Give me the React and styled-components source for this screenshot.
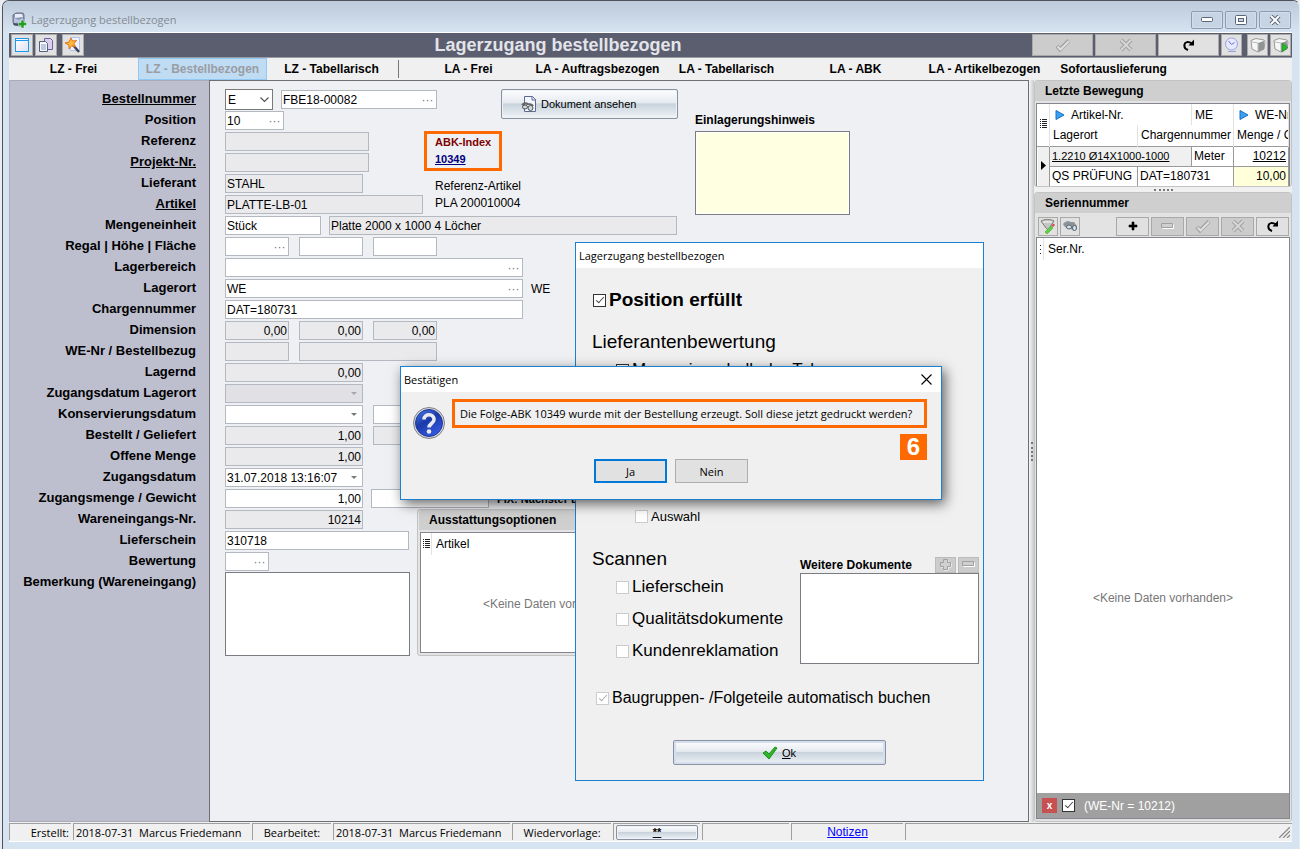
import React from "react";
import styled, { createGlobalStyle } from "styled-components";

const labels = [
  { id: "bestellnummer", text: "Bestellnummer", link: true },
  { id: "position", text: "Position" },
  { id: "referenz", text: "Referenz" },
  { id: "projekt", text: "Projekt-Nr.", link: true },
  { id: "lieferant", text: "Lieferant" },
  { id: "artikel", text: "Artikel", link: true },
  { id: "mengeneinheit", text: "Mengeneinheit" },
  { id: "regal", text: "Regal | Höhe | Fläche" },
  { id: "lagerbereich", text: "Lagerbereich" },
  { id: "lagerort", text: "Lagerort" },
  { id: "charge", text: "Chargennummer" },
  { id: "dimension", text: "Dimension" },
  { id: "wenr", text: "WE-Nr / Bestellbezug" },
  { id: "lagernd", text: "Lagernd" },
  { id: "zugangLagerort", text: "Zugangsdatum Lagerort" },
  { id: "konservierung", text: "Konservierungsdatum" },
  { id: "bestellt", text: "Bestellt / Geliefert" },
  { id: "offen", text: "Offene Menge" },
  { id: "zugangsdatum", text: "Zugangsdatum" },
  { id: "zugangsmenge", text: "Zugangsmenge / Gewicht" },
  { id: "wareneingang", text: "Wareneingangs-Nr." },
  { id: "lieferschein", text: "Lieferschein" },
  { id: "bewertung", text: "Bewertung" },
  { id: "bemerkung", text: "Bemerkung (Wareneingang)" },
];

const CheckIcon = () => (
  <svg width="16" height="14" viewBox="0 0 16 14" fill="none">
    <path d="M2 8l3 3.5L14 2.5" stroke="#a2a2a2" strokeWidth="4" />
    <path d="M2.5 8.5l3 3L14 3" stroke="#dedede" strokeWidth="2" />
  </svg>
);

const CrossIcon = () => (
  <svg width="14" height="14" viewBox="0 0 14 14" fill="none">
    <path d="M2 2l10 10M12 2L2 12" stroke="#a2a2a2" strokeWidth="4" />
    <path d="M2 2l10 10M12 2L2 12" stroke="#d6d6d6" strokeWidth="2" />
  </svg>
);

const RefreshIcon = () => (
  <svg width="12" height="12" viewBox="0 0 12 12" fill="none">
    <path d="M5 11C2 10 1 8 1.5 5.500C2 3 5 2 9 4.500" stroke="#000" strokeWidth="2" />
    <path d="M11 0.500V6.500H5.500z" fill="#000" />
  </svg>
);

const PlusIcon = () => (
  <svg width="10" height="10" viewBox="0 0 10 10">
    <path d="M4 1h2v3h3v2H6v3H4V6H1V4h3z" fill="#000" stroke="#000" strokeWidth="0.600" />
  </svg>
);

const PlusOutlineIcon = () => (
  <svg width="13" height="13" viewBox="0 0 13 13">
    <path d="M5 2h4v3h3v4H9v3H5V9H2V5h3z" fill="none" stroke="#fff" />
    <path d="M4.500 1.500h4v3h3v4h-3v3h-4v-3h-3v-4h3z" fill="#d0d0d0" stroke="#a0a0a0" />
  </svg>
);

const MinusIcon = () => (
  <svg width="13" height="7" viewBox="0 0 13 7">
    <path d="M1.500 5.500h11v-4" fill="none" stroke="#fff" />
    <path d="M0.500 0.500h11v4h-11z" fill="#d0d0d0" stroke="#a0a0a0" />
  </svg>
);

const AppIcon = () => (
  <svg width="16" height="16" viewBox="0 0 16 16">
    <path d="M2 3l3-2 7 0 1 2v8l-3 3-7-1-1-3z" fill="#8d97b4" stroke="#6a7086" />
    <path d="M4 2l7 0 1 3-8 1z" fill="#e6ecf8" />
    <path d="M2 11l8 1v2l-7-1z" fill="#4a4f60" />
    <path d="M3 6l5 2 4-2v4l-9 1z" fill="#b9c4e4" />
    <path d="M10 8h3v2.500h2.500v3H13V16h-3v-2.500H7.500v-3H10z" fill="#1fa01f" stroke="#eef" strokeWidth="0.500" />
  </svg>
);

const WindowIcon = () => (
  <svg width="16" height="16" viewBox="0 0 16 16">
    <defs>
      <linearGradient id="win" x1="0" y1="0" x2="1" y2="1">
        <stop offset="0" stopColor="#fff" />
        <stop offset="1" stopColor="#dfe0f6" />
      </linearGradient>
    </defs>
    <rect x="1.500" y="1.500" width="13" height="13" fill="url(#win)" stroke="#1b9bf0" />
    <path d="M1 3.500h14" stroke="#1b9bf0" />
  </svg>
);

const CopyIcon = () => (
  <svg width="16" height="16" viewBox="0 0 16 16">
    <path d="M6.500 1.500h6l2 2v9h-8z" fill="#d9d0ee" stroke="#6f5fa0" />
    <path d="M1.500 4.500h6l2 2v8h-8z" fill="#f4f6fc" stroke="#53617f" />
    <path d="M3 8h5M3 10h5M3 12h5" stroke="#8ba0c8" />
  </svg>
);

const WandIcon = () => (
  <svg width="18" height="18" viewBox="0 0 18 18">
    <path d="M6.500 1.500h9v13h-9z" fill="#eef2ff" stroke="#b4c2ea" />
    <path d="M9 9l6 7" stroke="#3d4352" strokeWidth="2.500" />
    <path d="M7 2l1.500 3 4-.5-2.500 3 1.500 3.500-3.500-1.500L5 13l0-4-4-2 4-1z" fill="#ffb63a" stroke="#e2761a" />
  </svg>
);

const ClockIcon = () => (
  <svg width="15" height="16" viewBox="0 0 15 16">
    <circle cx="7.500" cy="7" r="6" fill="#e6e9ff" stroke="#9ba1e0" />
    <path d="M4.500 4l3 3.500 3-2" fill="none" stroke="#6a70c4" />
    <path d="M4 14.500h8" stroke="#9ba1e0" />
  </svg>
);

const BoxIcon = ({ go }) => (
  <svg width="16" height="16" viewBox="0 0 16 16">
    <path d="M1 3.500l5-2 8 1.500 1 2-1 7-6 3-6-3z" fill="#f6f6f6" stroke="#9a9a9a" />
    <path d="M8 6l6-2v8l-6 3z" fill="#8f9494" />
    <path d="M2 5l6 1v8" fill="none" stroke="#bbb" />
    {go && <path d="M9 6l6 4.500L9 15z" fill="#27b52a" stroke="#11801a" strokeWidth="0.500" />}
  </svg>
);

const DocSearchIcon = () => (
  <svg width="16" height="17" viewBox="0 0 16 17">
    <path d="M3.500 0.500h8l3 3v12h-11z" fill="#f2f6ff" stroke="#5c6a8e" />
    <path d="M11 1v3h4" fill="none" stroke="#5c6a8e" />
    <path d="M1 9c2-2 4-2 6-1 2 0 4 0 5 2" fill="none" stroke="#666" strokeWidth="2" />
    <ellipse cx="4" cy="11" rx="2.500" ry="2" fill="#cfdbe0" stroke="#555" />
    <ellipse cx="9.500" cy="12" rx="2.500" ry="2.500" fill="#cfdbe0" stroke="#555" />
  </svg>
);

const FilterIcon = () => (
  <svg width="16" height="16" viewBox="0 0 16 16">
    <path d="M1 3c3-2 10-2 13 0l-4 6v4l-4-3z" fill="#c3c6c3" stroke="#7a7d7a" />
    <path d="M3 4h9" stroke="#fff" />
    <path d="M5 14l6-6 2 2-6 6z" fill="#5fd23c" stroke="#2e9a20" strokeWidth="0.500" />
    <path d="M11.500 7.500l2-2 1.500 1.500-2 2z" fill="#d94545" />
  </svg>
);

const BinocularsIcon = () => (
  <svg width="16" height="12" viewBox="0 0 16 12">
    <path d="M1 4l2-2 3-1 3 1 3 0 3 4 0 3-3 2-3-2-3 0-4-3z" fill="#8b9398" />
    <ellipse cx="7" cy="7" rx="2.500" ry="2" fill="#cfe3f0" stroke="#62696e" />
    <ellipse cx="12.500" cy="8" rx="2" ry="2.500" fill="#cfe3f0" stroke="#62696e" />
  </svg>
);

const QuestionIcon = () => (
  <svg width="34" height="34" viewBox="0 0 34 34">
    <defs>
      <linearGradient id="ask" x1="0" y1="0" x2="0.600" y2="1">
        <stop offset="0" stopColor="#4d80ea" />
        <stop offset="0.500" stopColor="#1a3aa8" />
        <stop offset="1" stopColor="#3458e0" />
      </linearGradient>
    </defs>
    <circle cx="17" cy="17" r="15.500" fill="#d8dade" stroke="#808288" />
    <circle cx="17" cy="17" r="13.500" fill="url(#ask)" stroke="#20369a" />
    <path
      d="M12 13.500c0-6.500 10.500-6 10 0 0 4-5 4-5 8"
      fill="none"
      stroke="#e8eaf0"
      strokeWidth="3.600"
    />
    <circle cx="17" cy="25.500" r="2.300" fill="#e8eaf0" />
  </svg>
);

const GreenCheck = () => (
  <svg width="16" height="14" viewBox="0 0 16 14">
    <path d="M1 7l3-2 3 3 6-7 2 1-8 11z" fill="#2fb52a" stroke="#1f8f1d" />
  </svg>
);

const ListIcon = () => (
  <svg width="7" height="10" viewBox="0 0 7 10" shapeRendering="crispEdges">
    <path d="M0 0h1v1H0zM0 2h1v1H0zM0 4h1v1H0zM0 6h1v1H0zM0 8h1v1H0z" fill="#222" />
    <path d="M2 0h5v1H2zM2 2h5v1H2zM2 4h5v1H2zM2 6h5v1H2zM2 8h5v1H2z" fill="#222" />
  </svg>
);

const DotsIcon = () => (
  <svg width="1" height="9" viewBox="0 0 1 9" shapeRendering="crispEdges">
    <path d="M0 0h1v1H0zM0 4h1v1H0zM0 8h1v1H0z" fill="#222" />
  </svg>
);

const SortIcon = () => (
  <svg width="10" height="10" viewBox="0 0 10 10">
    <path d="M1 0.500L9 5 1 9.500z" fill="#3aa0f2" stroke="#1a6fc4" />
  </svg>
);

const Caret = ({ faded }) => (
  <svg width="6" height="3" viewBox="0 0 6 3">
    <path d="M0 0h6L3 3z" fill={faded ? "#a8a8ac" : "#77797d"} />
  </svg>
);

const GripIcon = () => (
  <svg width="11" height="11" viewBox="0 0 11 11">
    <path d="M0 11L11 0M4 11l7-7M8 11l3-3" stroke="#8d8d8d" strokeWidth="1.300" />
  </svg>
);

const Field = ({ id, label, value = "", w, readOnly, right, more, combo, faded }) => (
  <FieldBox $w={w} $readOnly={readOnly} $faded={faded}>
    <FieldInput
      id={id}
      aria-label={label}
      defaultValue={value}
      readOnly={readOnly}
      $right={right}
    />
    {more && <FieldButton aria-label="Auswählen">···</FieldButton>}
    {combo && (
      <FieldButton aria-label="Kalender">
        <Caret faded={faded} />
      </FieldButton>
    )}
  </FieldBox>
);

const Check = ({ id, label, size, bold, indent, ...rest }) => (
  <CheckRow $indent={indent}>
    <CheckBox id={id} type="checkbox" {...rest} />
    <CheckLabel htmlFor={id} $size={size} $bold={bold}>
      {label}
    </CheckLabel>
  </CheckRow>
);

const TitleBar = () => (
  <TitleRow>
    <AppIcon />
    <WindowTitle>Lagerzugang bestellbezogen</WindowTitle>
    <WindowButtons>
      <WindowButton aria-label="Minimieren">
        <svg width="12" height="6" viewBox="0 0 12 6">
          <rect x="0.500" y="0.500" width="11" height="4" rx="1" fill="#fff" stroke="#5b6377" />
        </svg>
      </WindowButton>
      <WindowButton aria-label="Maximieren">
        <svg width="12" height="10" viewBox="0 0 12 10">
          <rect x="0.500" y="0.500" width="11" height="9" rx="1" fill="#fff" stroke="#5b6377" />
          <rect x="3.500" y="3.500" width="5" height="3" fill="#c5d2e4" stroke="#5b6377" />
        </svg>
      </WindowButton>
      <WindowButton aria-label="Schließen">
        <svg width="12" height="10" viewBox="0 0 12 10">
          <path d="M2 1l8 8M10 1L2 9" stroke="#5b6377" strokeWidth="4" />
          <path d="M2 1l8 8M10 1L2 9" stroke="#fff" strokeWidth="2" />
        </svg>
      </WindowButton>
    </WindowButtons>
  </TitleRow>
);

const Toolbar = () => (
  <ToolRow>
    <ToolGroup>
      <ToolButton aria-label="Fenster"><WindowIcon /></ToolButton>
      <ToolButton aria-label="Kopieren"><CopyIcon /></ToolButton>
    </ToolGroup>
    <ToolGroup>
      <ToolButton aria-label="Assistent"><WandIcon /></ToolButton>
    </ToolGroup>
    <PageTitle>Lagerzugang bestellbezogen</PageTitle>
    <ToolGroup>
      <ToolButton $w={61} disabled aria-label="Übernehmen"><CheckIcon /></ToolButton>
      <ToolButton $w={61} disabled aria-label="Verwerfen"><CrossIcon /></ToolButton>
      <ToolButton $w={61} aria-label="Aktualisieren"><RefreshIcon /></ToolButton>
      <ToolButton $w={21} aria-label="Verlauf"><ClockIcon /></ToolButton>
    </ToolGroup>
    <ToolGroup>
      <ToolButton $w={21} aria-label="Lager"><BoxIcon /></ToolButton>
      <ToolButton $w={21} aria-label="Buchen"><BoxIcon go /></ToolButton>
    </ToolGroup>
  </ToolRow>
);

const Tabs = () => (
  <TabRow>
    <Tab>LZ - Frei</Tab>
    <Tab $active>LZ - Bestellbezogen</Tab>
    <Tab>LZ - Tabellarisch</Tab>
    <TabDivider />
    <Tab>LA - Frei</Tab>
    <Tab>LA - Auftragsbezogen</Tab>
    <Tab>LA - Tabellarisch</Tab>
    <Tab>LA - ABK</Tab>
    <Tab>LA - Artikelbezogen</Tab>
    <Tab>Sofortauslieferung</Tab>
  </TabRow>
);

const HeadBlock = () => (
  <HeadGrid>
    <HeadRow $row={1}>
      <SelectBox>
        <Select aria-label="Bestellart" defaultValue="E">
          <option>E</option>
        </Select>
        <svg width="9" height="6" viewBox="0 0 9 6" fill="none">
          <path d="M0.500 0.500l4 4 4-4" stroke="#555" strokeWidth="1.200" />
        </svg>
      </SelectBox>
      <Field id="bestellnummer" value="FBE18-00082" w={156} more />
    </HeadRow>
    <HeadRow $row={2}>
      <Field id="position" value="10" w={59} more />
    </HeadRow>
    <HeadRow $row={3}>
      <Field id="referenz" w={144} readOnly />
    </HeadRow>
    <HeadRow $row={4}>
      <Field id="projekt" w={144} readOnly />
    </HeadRow>
    <HeadRow $row={5}>
      <Field id="lieferant" value="STAHL" w={138} readOnly />
    </HeadRow>
    <HeadRow $row={6}>
      <Field id="artikel" value="PLATTE-LB-01" w={198} readOnly />
    </HeadRow>
    <AbkBox>
      <AbkTitle>ABK-Index</AbkTitle>
      <AbkLink href="#abk">10349</AbkLink>
    </AbkBox>
    <ArticleRef>
      <div>Referenz-Artikel</div>
      <div>PLA 200010004</div>
    </ArticleRef>
    <DocButton>
      <DocSearchIcon />
      Dokument ansehen
    </DocButton>
    <HintLabel htmlFor="hinweis">Einlagerungshinweis</HintLabel>
    <HintArea id="hinweis" />
  </HeadGrid>
);

const EntryForm = () => (
  <FormPanel>
    <HeadBlock />
    <Row>
      <Field id="mengeneinheit" value="Stück" w={96} />
      <Field label="Bezeichnung" value="Platte 2000 x 1000 4 Löcher" w={348} readOnly />
    </Row>
    <Row $gap={10}>
      <Field id="regal" w={64} more />
      <Field label="Höhe" w={64} />
      <Field label="Fläche" w={64} />
    </Row>
    <Row>
      <Field id="lagerbereich" w={298} more />
    </Row>
    <Row>
      <Field id="lagerort" value="WE" w={298} more />
      <span>WE</span>
    </Row>
    <Row>
      <Field id="charge" value="DAT=180731" w={298} />
    </Row>
    <Row $gap={10}>
      <Field id="dimension" value="0,00" w={64} readOnly right />
      <Field label="Dimension 2" value="0,00" w={64} readOnly right />
      <Field label="Dimension 3" value="0,00" w={64} readOnly right />
    </Row>
    <Row $gap={10}>
      <Field id="wenr" w={64} readOnly />
      <Field label="Bestellbezug" w={138} readOnly />
    </Row>
    <Row>
      <Field id="lagernd" value="0,00" w={138} readOnly right />
    </Row>
    <Row>
      <Field id="zugangLagerort" w={138} readOnly combo faded />
    </Row>
    <Row $gap={10}>
      <Field id="konservierung" w={138} combo />
      <Field label="Konservierung bis" w={118} />
    </Row>
    <Row $gap={10}>
      <Field id="bestellt" value="1,00" w={138} readOnly right />
      <Field label="Geliefert" w={118} readOnly />
    </Row>
    <Row>
      <Field id="offen" value="1,00" w={138} readOnly right />
    </Row>
    <Row>
      <Field id="zugangsdatum" value="31.07.2018 13:16:07" w={138} combo />
    </Row>
    <Row>
      <Field id="zugangsmenge" value="1,00" w={138} right />
      <Field label="Gewicht" w={118} />
      <FixText>FIX: Nächster Beleg</FixText>
    </Row>
    <LowerBlock>
      <LowerLeft>
        <Row>
          <Field id="wareneingang" value="10214" w={138} readOnly right />
        </Row>
        <Row>
          <Field id="lieferschein" value="310718" w={184} />
        </Row>
        <Row>
          <Field id="bewertung" w={44} more />
        </Row>
        <NoteArea id="bemerkung" />
      </LowerLeft>
      <OptionsGroup>
        <GroupTitle>Ausstattungsoptionen</GroupTitle>
        <ListBox>
          <ListHead>
            <ListMark><ListIcon /></ListMark>
            Artikel
          </ListHead>
          <EmptyText>&lt;Keine Daten vorhanden&gt;</EmptyText>
        </ListBox>
      </OptionsGroup>
    </LowerBlock>
  </FormPanel>
);

const LastMovement = () => (
  <MovementGroup>
    <GroupTitle>Letzte Bewegung</GroupTitle>
    <TableBox>
      <MoveTable>
        <colgroup>
          <col width="12" />
          <col width="88" />
          <col width="54" />
          <col width="42" />
          <col />
        </colgroup>
        <thead>
          <tr>
            <Th rowSpan="2" $mark><ListIcon /></Th>
            <Th colSpan="2">
              <SortHead><SortIcon />Artikel-Nr.</SortHead>
            </Th>
            <Th>ME</Th>
            <Th>
              <SortHead><SortIcon />WE-Nr.</SortHead>
            </Th>
          </tr>
          <tr>
            <Th>Lagerort</Th>
            <Th colSpan="2">Chargennummer</Th>
            <Th>Menge / Gew.</Th>
          </tr>
        </thead>
        <tbody>
          <tr>
            <Td rowSpan="2" $mark>
              <svg width="5" height="9" viewBox="0 0 5 9">
                <path d="M0 0l5 4.500L0 9z" fill="#000" />
              </svg>
            </Td>
            <Td colSpan="2" $bg="#f0f0f0">
              <ItemLink href="#artikel" $small>1.2210 Ø14X1000-1000</ItemLink>
            </Td>
            <Td>Meter</Td>
            <Td $right>
              <ItemLink href="#we">10212</ItemLink>
            </Td>
          </tr>
          <tr>
            <Td>QS PRÜFUNG</Td>
            <Td colSpan="2">DAT=180731</Td>
            <Td $right $bg="#ffffd9">10,00</Td>
          </tr>
        </tbody>
      </MoveTable>
    </TableBox>
  </MovementGroup>
);

const SerialNumbers = () => (
  <SerialGroup>
    <GroupTitle>Seriennummer</GroupTitle>
    <SerialTools>
      <SmallButton $w={20} aria-label="Filter"><FilterIcon /></SmallButton>
      <SmallButton $w={20} aria-label="Suchen"><BinocularsIcon /></SmallButton>
      <Spacer />
      <SmallButton $w={33} aria-label="Hinzufügen"><PlusIcon /></SmallButton>
      <SmallButton $w={33} disabled aria-label="Entfernen"><MinusIcon /></SmallButton>
      <SmallButton $w={33} disabled aria-label="Speichern"><CheckIcon /></SmallButton>
      <SmallButton $w={33} disabled aria-label="Abbrechen"><CrossIcon /></SmallButton>
      <SmallButton $w={33} aria-label="Neu laden"><RefreshIcon /></SmallButton>
    </SerialTools>
    <ListBox>
      <ListHead>
        <ListMark $narrow><DotsIcon /></ListMark>
        Ser.Nr.
      </ListHead>
      <EmptyText $top={142}>&lt;Keine Daten vorhanden&gt;</EmptyText>
      <FilterBar>
        <FilterClose aria-label="Filter entfernen">x</FilterClose>
        <CheckBox id="filter" type="checkbox" defaultChecked />
        <FilterLabel htmlFor="filter">(WE-Nr = 10212)</FilterLabel>
      </FilterBar>
    </ListBox>
  </SerialGroup>
);

const StatusBar = () => (
  <StatusRow>
    <StatusCell $w={62} $align="flex-end">Erstellt:</StatusCell>
    <StatusCell $w={177}>2018-07-31&nbsp; Marcus Friedemann</StatusCell>
    <StatusCell $w={79} $align="center">Bearbeitet:</StatusCell>
    <StatusCell $w={177}>2018-07-31&nbsp; Marcus Friedemann</StatusCell>
    <StatusCell $w={99} $align="center">Wiedervorlage:</StatusCell>
    <StatusCell $w={87}>
      <StatusButton>**</StatusButton>
    </StatusCell>
    <StatusCell $w={87} />
    <StatusCell $w={112} $align="center">
      <NoteLink href="#notizen">Notizen</NoteLink>
    </StatusCell>
    <StatusCell $align="flex-end">
      <GripIcon />
    </StatusCell>
  </StatusRow>
);

const ReceiptDialog = () => (
  <ReceiptWindow role="dialog" aria-label="Lagerzugang bestellbezogen">
    <DialogTitle>Lagerzugang bestellbezogen</DialogTitle>
    <ReceiptBody>
      <Check id="erfuellt" label="Position erfüllt" size={19} bold indent={1} defaultChecked />
      <SectionTitle>Lieferantenbewertung</SectionTitle>
      <Check id="toleranz" label="Menge innerhalb der Toleranz" size={17} indent={24} />
      <SelectionRow>
        <Check id="auswahl" label="Auswahl" size={13} indent={43} disabled />
      </SelectionRow>
      <ScanBlock>
        <ScanList>
          <SectionTitle $flat>Scannen</SectionTitle>
          <Check id="scanLiefer" label="Lieferschein" size={17} indent={24} disabled />
          <Check id="scanQual" label="Qualitätsdokumente" size={17} indent={24} disabled />
          <Check id="scanKunde" label="Kundenreklamation" size={17} indent={24} disabled />
        </ScanList>
        <DocsColumn>
          <DocsHead>
            <DocsLabel htmlFor="dokumente">Weitere Dokumente</DocsLabel>
            <TinyButton disabled aria-label="Dokument hinzufügen"><PlusOutlineIcon /></TinyButton>
            <TinyButton disabled aria-label="Dokument entfernen"><MinusIcon /></TinyButton>
          </DocsHead>
          <DocsArea id="dokumente" />
        </DocsColumn>
      </ScanBlock>
      <Check
        id="baugruppen"
        label="Baugruppen- /Folgeteile automatisch buchen"
        size={16}
        indent={4}
        disabled
        defaultChecked
      />
      <OkButton>
        <GreenCheck />
        <span><u>O</u>k</span>
      </OkButton>
    </ReceiptBody>
  </ReceiptWindow>
);

const ConfirmDialog = () => (
  <ConfirmWindow role="dialog" aria-label="Bestätigen">
    <DialogTitle>
      Bestätigen
      <CloseButton aria-label="Schließen">
        <svg width="11" height="11" viewBox="0 0 11 11">
          <path d="M0.500 0.500l10 10M10.500 0.500l-10 10" stroke="#000" strokeWidth="1.100" />
        </svg>
      </CloseButton>
    </DialogTitle>
    <ConfirmBody>
      <QuestionIcon />
      <Message>
        Die Folge-ABK 10349 wurde mit der Bestellung erzeugt. Soll diese jetzt gedruckt werden?
      </Message>
    </ConfirmBody>
    <ConfirmButtons>
      <DialogButton $primary>Ja</DialogButton>
      <DialogButton>Nein</DialogButton>
    </ConfirmButtons>
    <StepBadge>6</StepBadge>
  </ConfirmWindow>
);

const App = () => (
  <Page>
    <GlobalStyle />
    <Window>
      <TitleBar />
      <Toolbar />
      <Tabs />
      <Body>
        <LabelPanel>
          {labels.map((l) => (
            <RowLabel key={l.id} htmlFor={l.id}>
              {l.link ? <a href={`#${l.id}`}>{l.text}</a> : l.text}
            </RowLabel>
          ))}
        </LabelPanel>
        <EntryForm />
        <Splitter><VerticalGrip /></Splitter>
        <SidePanel>
          <LastMovement />
          <SideSplitter><HorizontalGrip /></SideSplitter>
          <SerialNumbers />
        </SidePanel>
      </Body>
      <StatusBar />
      <ReceiptDialog />
      <ConfirmDialog />
    </Window>
  </Page>
);

export default App;

const ui = `"Liberation Sans", Arial, sans-serif`;
const segoe = `"Open Sans", "Noto Sans", sans-serif`;

const GlobalStyle = createGlobalStyle`
  *, *::before, *::after {
    box-sizing: border-box;
  }
  body {
    margin: 0;
    background: #e9ecf0;
    font-family: ${ui};
    font-size: 12px;
    color: #000;
  }
  button, input, select, textarea {
    font: inherit;
    color: inherit;
    margin: 0;
  }
  svg {
    flex: none;
  }
`;

const Page = styled.div`
  padding-left: 2px;
`;

const Window = styled.div`
  position: relative;
  display: flex;
  flex-direction: column;
  min-height: 100vh;
  padding: 0 7px 7px 6px;
  border: 1px solid #4d525b;
  border-right-color: #e4ebf3;
  border-bottom: none;
  border-radius: 7px 7px 0 0;
  background: #d6e3f1;
  overflow: hidden;
`;

const TitleRow = styled.header`
  display: flex;
  align-items: center;
  gap: 4px;
  height: 31px;
  margin: 0 -7px 0 -6px;
  padding: 6px 8px 0 8px;
  background: linear-gradient(#bccad9, #d6e3f1);
`;

const WindowTitle = styled.span`
  flex: 1;
  font-family: ${segoe};
  font-size: 11px;
  color: #858b93;
`;

const WindowButtons = styled.div`
  display: flex;
  gap: 2px;
`;

const WindowButton = styled.button`
  display: flex;
  align-items: center;
  justify-content: center;
  width: 32px;
  height: 18px;
  padding: 0;
  border: 1px solid #8c9bb4;
  border-radius: 2px;
  background: #c6d4e4;
  box-shadow: inset 0 0 0 1px #d3deeb;
`;

const ToolRow = styled.div`
  display: flex;
  align-items: center;
  gap: 5px;
  height: 25px;
  padding: 0 1px 0 2px;
  border-top: 1px solid #fff;
  background: #5b5e6f;
`;

const ToolGroup = styled.div`
  display: flex;
  gap: 2px;
`;

const ToolButton = styled.button`
  display: flex;
  align-items: center;
  justify-content: center;
  width: ${(props) => props.$w || 22}px;
  height: 22px;
  padding: 0;
  border: 1px solid #a9a9a9;
  background: ${(props) => (props.disabled ? "#cccccc" : "#e1e1e1")};
`;

const PageTitle = styled.h1`
  flex: 1;
  margin: 0;
  text-align: center;
  font-size: 18px;
  line-height: 20px;
  color: #e3e4ea;
`;

const TabRow = styled.nav`
  display: flex;
  align-items: center;
  height: 23px;
  border-top: 1px solid #9a9ba3;
  background: #f0f0f0;
`;

const Tab = styled.button`
  width: 129px;
  height: 22px;
  padding: 0;
  border: 1px solid ${(props) => (props.$active ? "#90c8f6" : "transparent")};
  background: ${(props) => (props.$active ? "#c0dcf3" : "transparent")};
  color: ${(props) => (props.$active ? "#9a9da3" : "#000")};
  font-size: 12px;
  font-weight: bold;
  white-space: nowrap;
`;

const TabDivider = styled.span`
  width: 1px;
  height: 18px;
  margin: 0 5px 0 2px;
  background: #777;
`;

const Body = styled.main`
  display: flex;
  flex: 1;
  background: #f0f0f0;
`;

const LabelPanel = styled.div`
  display: flex;
  flex-direction: column;
  width: 200px;
  padding: 8px 13px 0 0;
  border: 1px solid #a9abbb;
  border-right: none;
  background: #bdbfcf;
`;

const RowLabel = styled.label`
  height: 21px;
  line-height: 20px;
  text-align: right;
  font-size: 13px;
  font-weight: bold;
  white-space: nowrap;

  a {
    color: inherit;
  }
`;

const FormPanel = styled.form`
  flex: 1;
  min-width: 0;
  padding: 8px 0 8px 15px;
  border: 1px solid #6d6f75;
  background: #eff0f3;
`;

const Row = styled.div`
  display: flex;
  align-items: center;
  gap: ${(props) => props.$gap || 8}px;
  height: 21px;
  white-space: nowrap;
`;

const HeadGrid = styled.div`
  display: grid;
  grid-template-columns: 199px 77px 177px 172px;
  grid-template-rows: repeat(6, 21px);
`;

const HeadRow = styled(Row)`
  grid-column: 1;
  grid-row: ${(props) => props.$row};
`;

const FieldBox = styled.div`
  display: flex;
  align-items: center;
  flex: none;
  width: ${(props) => props.$w}px;
  height: 19px;
  border: 1px solid #b4b8c0;
  background: ${(props) =>
    props.$faded ? "#e1e1e5" : props.$readOnly ? "#eaeaec" : "#fff"};
`;

const FieldInput = styled.input`
  flex: 1;
  min-width: 0;
  height: 17px;
  padding: 0 1px;
  border: none;
  outline: none;
  background: transparent;
  text-align: ${(props) => (props.$right ? "right" : "left")};
`;

const FieldButton = styled.button.attrs({ type: "button" })`
  display: flex;
  align-items: center;
  justify-content: center;
  width: 17px;
  height: 17px;
  padding: 0;
  border: none;
  background: transparent;
  color: #777;
`;

const SelectBox = styled.div`
  position: relative;
  flex: none;
  width: 48px;
  height: 21px;

  svg {
    position: absolute;
    right: 4px;
    top: 8px;
    pointer-events: none;
  }
`;

const Select = styled.select`
  appearance: none;
  width: 100%;
  height: 21px;
  padding: 0 2px;
  border: 1px solid #7a7a7a;
  border-radius: 0;
  background: #fff;
`;

const AbkBox = styled.div`
  grid-area: 3 / 2 / 5 / 3;
  height: 40px;
  width: 78px;
  padding: 0 8px;
  border: 3px solid #ff6a00;
  font-size: 11px;
  font-weight: bold;
  line-height: 17px;
  white-space: nowrap;
`;

const AbkTitle = styled.div`
  color: #800000;
`;

const AbkLink = styled.a`
  color: #000080;
`;

const ArticleRef = styled.div`
  grid-area: 5 / 2 / 7 / 4;
  padding: 5px 11px 0;
  line-height: 17px;
`;

const GlassButton = styled.button.attrs({ type: "button" })`
  display: flex;
  align-items: center;
  justify-content: center;
  gap: 4px;
  padding: 0;
  border: 1px solid #8a92a2;
  border-radius: 2px;
  background: linear-gradient(#fdfdfe, #e6ebf0 45%, #c9d3dd 50%, #e3e9ee 85%, #f4f6f8);
  box-shadow: inset 0 0 0 1px #eef1f5;
  font-size: 11px;
`;

const DocButton = styled(GlassButton)`
  grid-area: 1 / 3 / 3 / 4;
  justify-content: flex-start;
  height: 30px;
  padding-left: 19px;
`;

const HintLabel = styled.label`
  grid-area: 2 / 4;
  margin-left: 17px;
  line-height: 21px;
  font-size: 12px;
  font-weight: bold;
`;

const TextArea = styled.textarea`
  display: block;
  padding: 2px;
  border: 1px solid #7a7c82;
  border-radius: 0;
  background: #fff;
  resize: none;
`;

const HintArea = styled(TextArea)`
  grid-area: 3 / 4 / 7 / 5;
  width: 155px;
  margin-left: 17px;
  background: #ffffe1;
  box-shadow: inset 0 0 0 1px #fff;
`;

const FixText = styled.span`
  font-size: 11px;
  font-weight: bold;
`;

const LowerBlock = styled.div`
  display: flex;
  gap: 7px;
`;

const LowerLeft = styled.div`
  width: 185px;
`;

const NoteArea = styled(TextArea)`
  width: 100%;
  height: 84px;
`;

const Group = styled.section`
  display: flex;
  flex-direction: column;
  padding: 0 2px 2px;
  border: 1px solid #c3c3c3;
  border-radius: 3px;
  background: #e3e3e3;
`;

const OptionsGroup = styled(Group)`
  width: 272px;
`;

const GroupTitle = styled.h2`
  margin: 0 -1px 2px;
  padding: 0 10px;
  border-radius: 3px 3px 0 0;
  background: #cfcfcf;
  font-size: 12px;
  line-height: 20px;
`;

const ListBox = styled.div`
  display: flex;
  flex-direction: column;
  flex: 1;
  border: 1px solid #83868f;
  background: #fff;
`;

const ListHead = styled.div`
  display: flex;
  align-items: center;
  gap: 4px;
  height: 22px;
`;

const ListMark = styled.span`
  display: flex;
  align-items: center;
  justify-content: center;
  width: ${(props) => (props.$narrow ? 7 : 11)}px;
  height: 22px;
  border-right: 1px solid #e2e2e2;
`;

const EmptyText = styled.div`
  display: flex;
  flex: 1;
  align-items: center;
  justify-content: center;
  padding-top: ${(props) => props.$top || 0}px;
  color: #777;
`;

const Splitter = styled.div`
  display: flex;
  align-items: center;
  justify-content: center;
  width: 5px;
  background: linear-gradient(to right, #f6f6f6, #c9cacd);
`;

const VerticalGrip = styled.span`
  height: 19px;
  border-left: 2px dotted #77797f;
`;

const SideSplitter = styled.div`
  display: flex;
  align-items: center;
  justify-content: center;
  height: 5px;
`;

const HorizontalGrip = styled.span`
  width: 19px;
  border-top: 2px dotted #77797f;
`;

const SidePanel = styled.aside`
  display: flex;
  flex-direction: column;
  width: 258px;
`;

const MovementGroup = styled(Group)`
  padding: 0 1px;
`;

const SerialGroup = styled(Group)`
  flex: 1;
  padding: 0 1px 2px;
`;

const TableBox = styled.div`
  height: 83px;
  border: 1px solid #83868f;
  border-bottom: none;
  background: #fff;
  overflow: hidden;
`;

const MoveTable = styled.table`
  width: 100%;
  table-layout: fixed;
  border-collapse: collapse;
`;

const Th = styled.th`
  height: 21px;
  padding: ${(props) => (props.$mark ? "0" : "0 3px")};
  border-right: 1px solid #e2e2e2;
  font-weight: normal;
  text-align: ${(props) => (props.$mark ? "center" : "left")};
  white-space: nowrap;
  overflow: hidden;
`;

const SortHead = styled.span`
  display: flex;
  align-items: center;
  gap: 6px;
  padding-left: 2px;
`;

const Td = styled.td`
  height: 20px;
  padding: ${(props) => (props.$mark ? "0" : "0 2px")};
  border: 1px solid #9a9a9a;
  border-left-color: ${(props) => (props.$mark ? "transparent" : "#9a9a9a")};
  background: ${(props) => props.$bg || (props.$mark ? "#f0f0f0" : "#fff")};
  text-align: ${(props) => (props.$right ? "right" : props.$mark ? "center" : "left")};
  white-space: nowrap;
`;

const ItemLink = styled.a`
  color: inherit;
  font-size: ${(props) => (props.$small ? 11 : 12)}px;
`;

const SerialTools = styled.div`
  display: flex;
  align-items: center;
  gap: 2px;
  height: 22px;
  padding: 0 1px 0 2px;
`;

const Spacer = styled.span`
  flex: 1;
`;

const SmallButton = styled(ToolButton)`
  height: 19px;
`;

const FilterBar = styled.div`
  display: flex;
  align-items: center;
  gap: 5px;
  height: 25px;
  padding: 0 5px;
  background: #a0a0a0;
`;

const FilterClose = styled.button`
  width: 15px;
  height: 15px;
  padding: 0;
  border: none;
  background: #c75050;
  color: #fff;
  font-size: 10px;
  font-weight: bold;
  line-height: 14px;
`;

const FilterLabel = styled.label`
  margin-left: 4px;
  color: #fff;
`;

const CheckBox = styled.input`
  appearance: none;
  flex: none;
  position: relative;
  width: 13px;
  height: 13px;
  border: 1px solid #333;
  background: #fff;

  &:disabled {
    border-color: #ccc;
  }

  &:checked::after {
    content: "";
    position: absolute;
    left: 4px;
    top: 0;
    width: 4px;
    height: 8px;
    border: solid #444;
    border-width: 0 1px 1px 0;
    transform: rotate(42deg);
  }

  &:disabled:checked::after {
    border-color: #aaa;
  }
`;

const StatusRow = styled.footer`
  display: flex;
  align-items: center;
  gap: 2px;
  height: 20px;
  border-bottom: 1px solid #fff;
  background: #f0f0f0;
`;

const StatusCell = styled.div`
  display: flex;
  align-items: center;
  justify-content: ${(props) => props.$align || "flex-start"};
  flex: ${(props) => (props.$w ? "none" : "1")};
  width: ${(props) => (props.$w ? `${props.$w}px` : "auto")};
  height: 17px;
  padding: 0 2px;
  border-top: 1px solid #a0a0a0;
  border-left: 1px solid #a0a0a0;
  font-family: ${segoe};
  font-size: 11px;
  white-space: nowrap;
`;

const StatusButton = styled(GlassButton)`
  flex: 1;
  height: 15px;
  font-family: ${ui};
  font-weight: bold;
  text-decoration: underline;
`;

const NoteLink = styled.a`
  font-family: ${ui};
  font-size: 12px;
  color: #0000ff;
`;

const DialogWindow = styled.div`
  position: absolute;
  border: 1px solid #1b80cf;
  background: #f0f0f0;
`;

const ReceiptWindow = styled(DialogWindow)`
  left: 572px;
  top: 241px;
  width: 409px;
`;

const ConfirmWindow = styled(DialogWindow)`
  left: 397px;
  top: 365px;
  width: 542px;
  box-shadow: 3px 4px 12px rgba(0, 0, 0, 0.6);
`;

const DialogTitle = styled.div`
  display: flex;
  align-items: center;
  justify-content: space-between;
  height: 25px;
  padding: 0 3px;
  background: #fff;
  font-family: ${segoe};
  font-size: 11px;
`;

const ReceiptBody = styled.div`
  display: flex;
  flex-direction: column;
  padding: 16px 4px 15px 16px;
`;

const CheckRow = styled.div`
  display: flex;
  align-items: center;
  gap: 3px;
  height: 32px;
  padding-left: ${(props) => props.$indent}px;
`;

const CheckLabel = styled.label`
  font-size: ${(props) => props.$size}px;
  font-weight: ${(props) => (props.$bold ? "bold" : "normal")};
  white-space: nowrap;
`;

const SectionTitle = styled.h3`
  margin: ${(props) => (props.$flat ? "0" : "14px 0 0")};
  font-size: 19px;
  font-weight: normal;
  line-height: 24px;
`;

const SelectionRow = styled.div`
  margin-top: 114px;
`;

const ScanBlock = styled.div`
  display: flex;
  margin: 15px 0;
`;

const ScanList = styled.div`
  width: 208px;
`;

const DocsColumn = styled.div`
  flex: 1;
  padding-top: 9px;
`;

const DocsHead = styled.div`
  display: flex;
  align-items: center;
  gap: 2px;
  height: 17px;
`;

const DocsLabel = styled.label`
  flex: 1;
  font-weight: bold;
`;

const TinyButton = styled(ToolButton)`
  width: 21px;
  height: 16px;
  border-color: #bcbcbc;
`;

const DocsArea = styled(TextArea)`
  width: 100%;
  height: 91px;
`;

const OkButton = styled(GlassButton)`
  align-self: center;
  width: 213px;
  height: 25px;
  margin: 26px 13px 0 0;
  box-shadow: inset 0 0 0 2px #d5deef;
`;

const CloseButton = styled.button`
  display: flex;
  align-items: center;
  justify-content: center;
  width: 24px;
  height: 24px;
  padding: 0;
  border: none;
  background: transparent;
`;

const ConfirmBody = styled.div`
  display: flex;
  align-items: flex-end;
  gap: 6px;
  padding: 7px 14px 0 11px;
  height: 48px;
`;

const Message = styled.p`
  flex: 1;
  align-self: flex-start;
  margin: 0;
  padding: 0 5px;
  border: 3px solid #ff6a00;
  font-family: ${segoe};
  font-size: 11px;
  line-height: 23px;
  white-space: nowrap;
`;

const ConfirmButtons = styled.div`
  display: flex;
  justify-content: center;
  gap: 8px;
  padding: 19px 0 16px;
`;

const DialogButton = styled.button`
  width: 73px;
  height: 24px;
  padding: 0;
  border: ${(props) => (props.$primary ? "2px solid #0078d7" : "1px solid #adadad")};
  background: #e1e1e1;
  font-family: ${segoe};
  font-size: 11px;
`;

const StepBadge = styled.span`
  position: absolute;
  right: 14px;
  top: 67px;
  width: 27px;
  height: 26px;
  background: #ff6a00;
  color: #fff;
  font-size: 24px;
  font-weight: bold;
  line-height: 26px;
  text-align: center;
`;
